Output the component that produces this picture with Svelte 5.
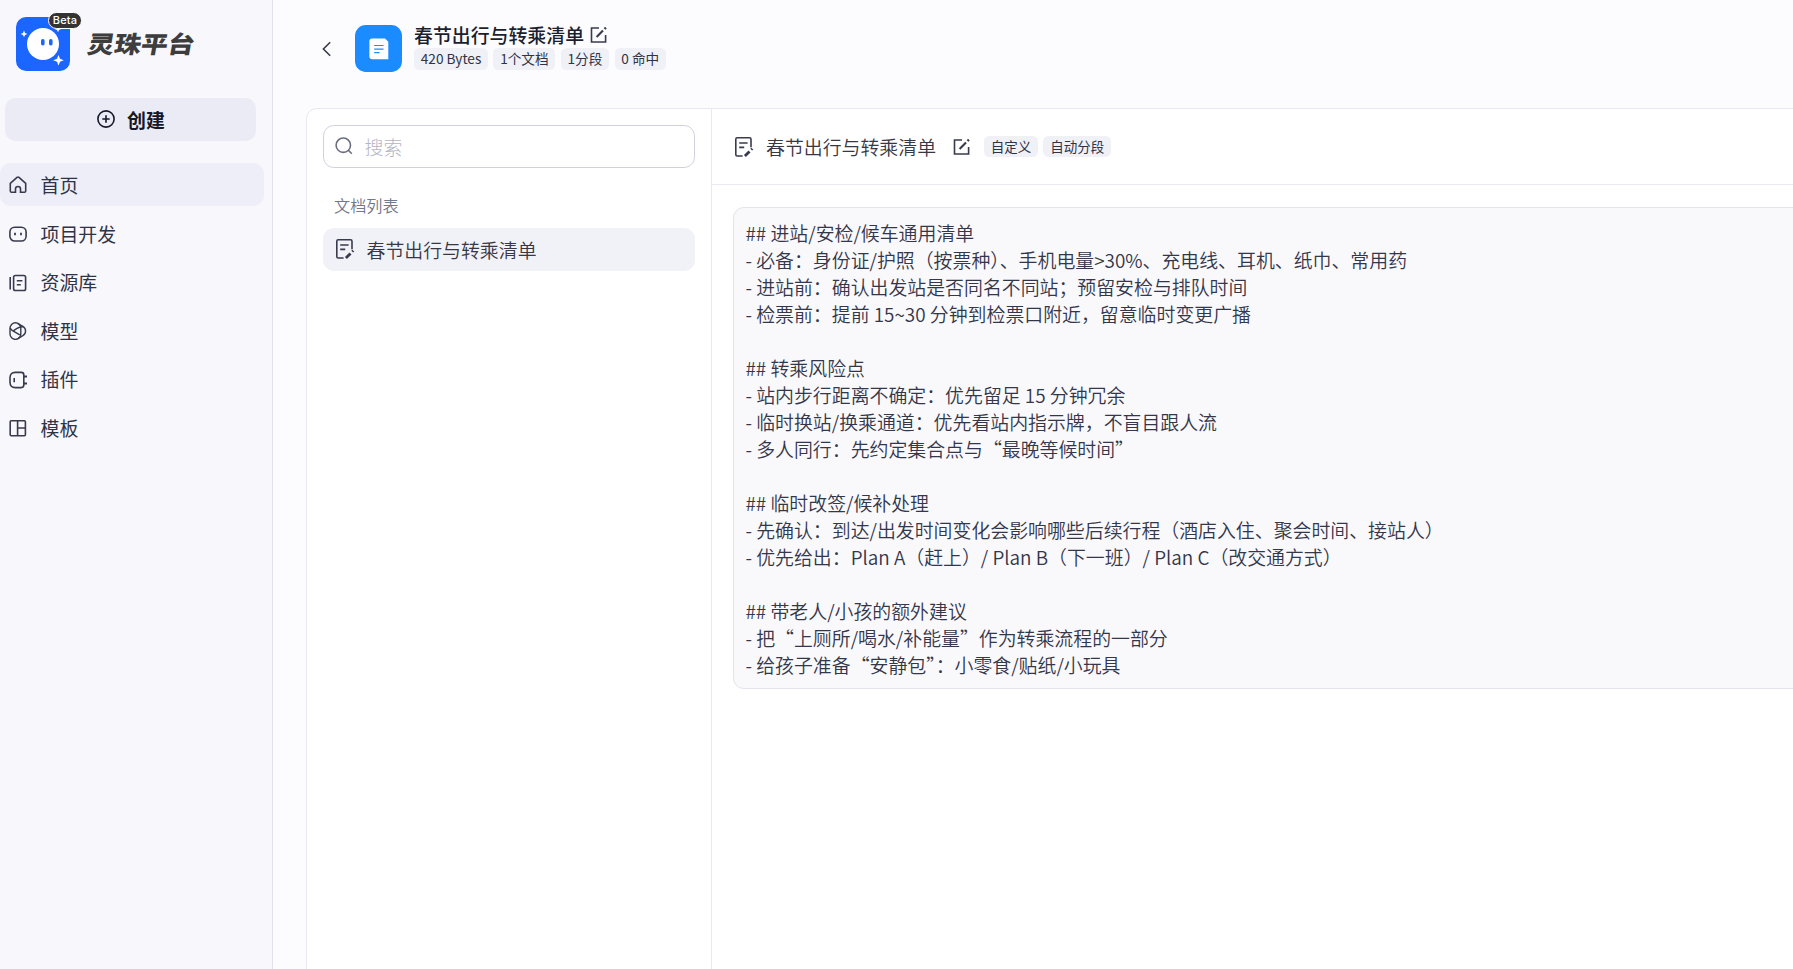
<script lang="ts">
    let keyword = '';

    const menus = [
        { name: '首页', icon: 'home' },
        { name: '项目开发', icon: 'project' },
        { name: '资源库', icon: 'library' },
        { name: '模型', icon: 'model' },
        { name: '插件', icon: 'plugin' },
        { name: '模板', icon: 'template' }
    ];
    let active = 'home';

    const title = '春节出行与转乘清单';
    const stats = ['420 Bytes', '1个文档', '1分段', '0 命中'];
    const tags = ['自定义', '自动分段'];

    const content = `## 进站/安检/候车通用清单
- 必备：身份证/护照（按票种）、手机电量>30%、充电线、耳机、纸巾、常用药
- 进站前：确认出发站是否同名不同站；预留安检与排队时间
- 检票前：提前 15~30 分钟到检票口附近，留意临时变更广播

## 转乘风险点
- 站内步行距离不确定：优先留足 15 分钟冗余
- 临时换站/换乘通道：优先看站内指示牌，不盲目跟人流
- 多人同行：先约定集合点与“最晚等候时间”

## 临时改签/候补处理
- 先确认：到达/出发时间变化会影响哪些后续行程（酒店入住、聚会时间、接站人）
- 优先给出：Plan A（赶上）/ Plan B（下一班）/ Plan C（改交通方式）

## 带老人/小孩的额外建议
- 把“上厕所/喝水/补能量”作为转乘流程的一部分
- 给孩子准备“安静包”：小零食/贴纸/小玩具`;
</script>

{#snippet editIcon()}
    <svg class="edit" viewBox="0 0 18 18" width="18" height="18">
        <path d="M9 2H1.500v14H15.600V9" />
        <path d="M6.600 11l6.400-6.400" stroke-width="2.1" />
        <path d="M14.600 3l1.300-1.300" stroke-width="2.4" />
    </svg>
{/snippet}

{#snippet docIcon()}
    <svg class="doc" viewBox="0 0 20 22" width="20" height="22">
        <path d="M8.6 20H3.2q-1.4 0-1.4-1.4V3.2q0-1.4 1.4-1.4h12.4q1.4 0 1.4 1.4v8" />
        <path d="M5.2 7h8.4M5.2 11.4h5" />
        <path d="M10.9 20l4.6-4.6" stroke-width="2.8" />
        <path d="M17.2 13.7l1.100-1.100" stroke-width="2.6" />
    </svg>
{/snippet}

<div class="app">
    <aside class="sidebar">
        <div class="brand">
            <div class="logo">
                <svg viewBox="0 0 54 54" width="54" height="54">
                    <rect width="54" height="54" rx="10" fill="#1b66ff" />
                    <circle cx="27" cy="27" r="16" fill="#fff" />
                    <rect x="25" y="22" width="3.6" height="6.4" rx="1.7" fill="#1b66ff" />
                    <rect x="33" y="22" width="3.6" height="6.4" rx="1.7" fill="#1b66ff" />
                    <path fill="#fff" d="M8 13.600l1 2.300 2.400 1-2.400 1-1 2.400-1-2.400-2.400-1 2.400-1zM42 8.600l1 2.300 2.400 1-2.400 1-1 2.400-1-2.400-2.400-1 2.400-1zM42.500 38l1.500 3.700 3.700 1.500-3.700 1.500-1.500 3.700-1.500-3.700-3.700-1.500 3.700-1.500z" />
                </svg>
                <span class="beta">Beta</span>
            </div>
            <span class="brand-name">灵珠平台</span>
        </div>

        <button class="create">
            <svg viewBox="0 0 18 18" width="18" height="18">
                <circle cx="9" cy="9" r="8.100" />
                <path d="M9 5.300v7.400M5.300 9h7.400" />
            </svg>
            创建
        </button>

        <nav>
            {#each menus as menu}
                <button class="menu" class:active={active === menu.icon} on:click={() => (active = menu.icon)}>
                    <svg viewBox="0 0 18 18" width="18" height="18">
                        {#if menu.icon === 'home'}
                            <path d="M1.300 7.300L8 1.400q1-.8 2 0l6.700 5.900V15q0 1.300-1.300 1.300h-3.900v-3.500q0-2.300-2.500-2.300t-2.500 2.300v3.500H2.600Q1.300 16.300 1.300 15z" />
                        {:else if menu.icon === 'project'}
                            <rect x=".9" y="2.200" width="16.200" height="13.800" rx="4.800" />
                            <path d="M6 7.800v2.400M12 7.800v2.400" stroke-width="1.800" />
                        {:else if menu.icon === 'library'}
                            <path d="M1.200 3v12.500" />
                            <rect x="4.600" y="1.500" width="12" height="15" rx="1.800" />
                            <path d="M7.800 6.800h5.600M7.800 10.800h4" />
                        {:else if menu.icon === 'model'}
                            <g stroke-width="1.400">
                                <rect x="1" y=".8" width="10.800" height="16.600" rx="5.400" />
                                <path d="M8.600 1.300l5.300 3.100a5.300 5.300 0 0 1 0 9.200l-5.400 3.200" />
                                <path d="M1.300 6q.6 1.700 2.200 2.700l7.300 4.200M3.500 9.300l4.500-3q3.500-2 6.300-1.500" />
                            </g>
                        {:else if menu.icon === 'plugin'}
                            <path d="M6.300 1.400h6q2.500 0 2.500 2.500v10.200q0 2.500-2.500 2.500h-6Q1 16.600 1 11.300V6.700Q1 1.400 6.300 1.400z" />
                            <path d="M5.200 7v4.200" />
                            <path d="M14.500 5.600h3.500M14.500 12.500h3.500" stroke-width="2" />
                        {:else}
                            <rect x="1.200" y="1.800" width="15.200" height="15" rx="1" />
                            <path d="M8.600 1.800v15M8.600 9h7.600" />
                        {/if}
                    </svg>
                    {menu.name}
                </button>
            {/each}
        </nav>
    </aside>

    <main>
        <header class="page-header">
            <svg class="back" viewBox="0 0 10 16" width="10" height="16">
                <path d="M8.200 1.300L1.400 8l6.800 6.700" />
            </svg>
            <div class="file-icon">
                <svg viewBox="0 0 20 22" width="20" height="22">
                    <path fill="#fff" d="M3 .5h13l3.300 3.300v17.500H3.200Q.4 21.300.4 18.500V3Q.4.5 3 .5z" />
                    <path d="M5.200 7.500h9.300M5.200 11.200h9.300M5.200 14.700h5.400" stroke="#1a8cff" stroke-width="1.200" />
                </svg>
            </div>
            <div class="info">
                <div class="title">{title} {@render editIcon()}</div>
                <div class="tags">
                    {#each stats as item}
                        <span class="tag">{item}</span>
                    {/each}
                </div>
            </div>
        </header>

        <div class="card">
            <section class="docs">
                <label class="search">
                    <svg viewBox="0 0 18 18" width="18" height="18">
                        <circle cx="8.300" cy="8.200" r="7.200" />
                        <path d="M13.300 13.300l3.500 3.500" />
                    </svg>
                    <input placeholder="搜索" bind:value={keyword} />
                </label>
                <div class="list-label">文档列表</div>
                <div class="doc-item">{@render docIcon()}<span>{title}</span></div>
            </section>

            <section class="detail">
                <div class="detail-header">
                    {@render docIcon()}
                    <span class="doc-name">{title}</span>
                    {@render editIcon()}
                    <div class="tags">
                        {#each tags as item}
                            <span class="tag">{item}</span>
                        {/each}
                    </div>
                </div>
                <div class="content">{content}</div>
            </section>
        </div>
    </main>
</div>

<style>
    :global(body) { overflow: hidden; }
    .app {
        display: flex; width: 100vw; height: 100vh; overflow: hidden;
        font-family: "Noto Sans CJK SC", sans-serif; font-size: 18.9px; line-height: 27px;
        color: #383743; background: #fcfcff;
    }
    button { border: none; background: none; font: inherit; color: inherit; cursor: pointer; }
    svg { flex: none; display: block; fill: none; stroke: #383b4d; stroke-width: 1.6; }

    .sidebar {
        width: 273px; flex: none; box-sizing: border-box;
        background: #f7f7fc; border-right: 1px solid #e1e2ee;
    }
    .brand { display: flex; align-items: center; height: 54px; padding: 17px 0 0 16px; }
    .logo { position: relative; }
    .logo svg, .file-icon svg { stroke: none; }
    .beta {
        position: absolute; left: 32px; top: -5px; box-sizing: border-box; width: 34px; height: 17px;
        border: 1px solid #fff; border-radius: 9px; background: #333; color: #fff;
        font: 500 11px/15px Inter, sans-serif; text-align: center; letter-spacing: .2px;
    }
    .brand-name {
        margin: -3px 0 0 17.500px; font-size: 26.800px; font-weight: 900; color: #3d3d3d;
        transform: skewX(-10deg) scaleY(.88);
    }
    .create {
        display: flex; align-items: center; justify-content: center; gap: 12px;
        width: 251px; height: 43px; margin: 27px 0 0 5px; padding: 0 0 0 1px; border-radius: 10.8px;
        background: #ebebf5; color: #15182b; font-weight: 600;
    }
    .create svg { stroke: #15182b; margin-top: -1px; }
    nav { display: flex; flex-direction: column; gap: 5.4px; margin-top: 22px; }
    .menu {
        display: flex; align-items: center; gap: 14px; width: 264px; height: 43.2px;
        padding: 0 0 0 8.500px; border-radius: 10.8px; color: #2f3346; font-weight: 400; text-align: left;
    }
    .menu svg { margin-top: 1.500px; }
    .menu.active { background: #eeeef8; }

    main { flex: 1; min-width: 0; display: flex; flex-direction: column; }
    .page-header { display: flex; height: 83px; padding: 25px 0 0 49px; }
    .back { margin: 16px 23px 0 0; }
    .file-icon {
        display: flex; align-items: center; justify-content: center;
        width: 47px; height: 47px; margin-right: 12px; border-radius: 10.8px; background: #1a8cff;
    }
    .title { display: flex; align-items: center; gap: 5.500px; height: 23px; margin-top: -2px; font-weight: 500; color: #1c1f2e; }
    .tags { display: flex; gap: 5.4px; }
    .tag {
        height: 21.600px; padding: 0 6.750px; border-radius: 5.400px; background: #f0f0f7;
        font-size: 13.5px; line-height: 21.600px; color: #2f3346; white-space: nowrap;
    }
    .info .tags { margin-top: 2px; }
    .info .tag { font-size: 13.65px; }

    .card {
        flex: 1; display: flex; margin: 0 -20px 0 33px; border: 1px solid #e8e9f2;
        border-bottom: none; border-radius: 10.8px 0 0; background: #fff;
    }
    .docs { width: 405px; flex: none; box-sizing: border-box; padding: 16px 16px 0; border-right: 1px solid #e8e9f2; }
    .search {
        display: flex; align-items: center; height: 43px; box-sizing: border-box; gap: 11.500px;
        padding: 0 11px; border: 1px solid #d0d1df; border-radius: 10.8px;
    }
    .search svg { stroke: #6b6d80; margin-top: -1px; }
    input {
        flex: 1; min-width: 0; padding: 0; border: none; outline: none; background: none;
        font: inherit; font-weight: 300; color: #383743;
    }
    input::placeholder { color: #b3b5c6; }
    .list-label { margin: 24px 0 9px 11px; font-size: 16.2px; font-weight: 350; color: #74778a; }
    .doc-item {
        display: flex; align-items: center; height: 43px; padding-left: 12px; gap: 11.500px;
        border-radius: 10.8px; background: #f1f2f8; font-weight: 350;
    }
    .doc-item svg { margin-top: -2px; }
    .detail { flex: 1; min-width: 0; }
    .detail-header {
        display: flex; align-items: center; height: 75px; padding-left: 22px; border-bottom: 1px solid #e8e9f2;
    }
    .doc-name { margin: 0 17px 0 12px; font-weight: 350; }
    .detail-header .tags { margin: 0 0 0 13px; }
    .content {
        margin: 22px 0 0 21px; padding: 10.8px 11.500px 10px; border: 1px solid #e2e3ec; border-radius: 10.8px;
        background: #f9f9fc; color: #34364a; font-weight: 350; white-space: pre-wrap;
    }
</style>
